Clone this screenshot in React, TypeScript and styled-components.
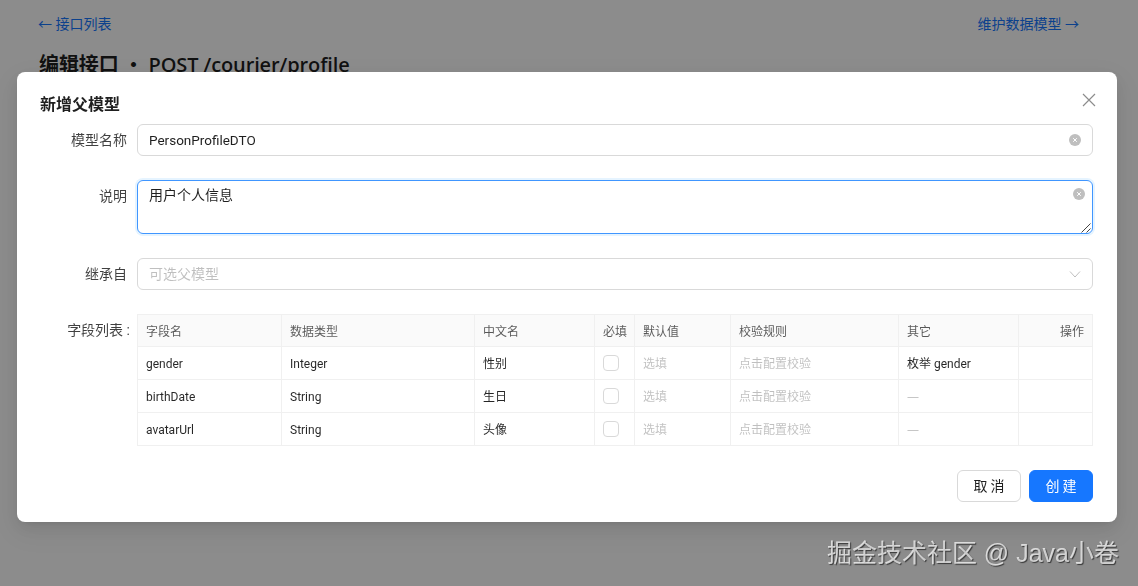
import styled, { createGlobalStyle } from "styled-components";

const FONT = `Roboto, "Noto Sans CJK SC", sans-serif`;

const GlobalStyle = createGlobalStyle`
  html, body {
    margin: 0;
    padding: 0;
    height: 100%;
    background: #fff;
    overflow: hidden;
    font-family: ${FONT};
    color: rgba(0, 0, 0, 0.88);
  }
`;

const Page = styled.div`
  padding: 14px 59px 0 38px;
`;

const TopBar = styled.div`
  display: flex;
  justify-content: space-between;
  font-size: 14px;
  line-height: 20px;
`;

const TopLink = styled.a`
  color: #1677ff;
`;

const Heading = styled.h1`
  margin: 17px 0 0 1px;
  font-family: "Open Sans", "Noto Sans CJK SC", sans-serif;
  font-size: 20px;
  line-height: 28px;
  font-weight: 600;
  letter-spacing: -0.12px;
`;

const Mask = styled.div`
  position: fixed;
  inset: 0;
  background: rgba(0, 0, 0, 0.45);
`;

const Modal = styled.div`
  position: fixed;
  left: 17px;
  top: 72px;
  width: 1100px;
  height: 450px;
  box-sizing: border-box;
  padding: 20px 24px;
  background: #fff;
  border-radius: 8px;
  box-shadow: 0 6px 16px rgba(0, 0, 0, 0.08), 0 3px 6px -4px rgba(0, 0, 0, 0.12),
    0 9px 28px 8px rgba(0, 0, 0, 0.05);
`;

const CloseButton = styled.button`
  position: absolute;
  top: 20px;
  right: 20px;
  width: 16px;
  height: 16px;
  padding: 0;
  border: 0;
  background: none;
  color: rgba(0, 0, 0, 0.45);
  display: flex;
`;

const Title = styled.div`
  margin: 1px 0 7px -1px;
  font-size: 16px;
  line-height: 24px;
  font-weight: 600;
`;

const FormRow = styled.div`
  display: flex;
  margin-bottom: 24px;
`;

const Label = styled.label<{ $gap?: number }>`
  width: ${({ $gap = 10 }) => 96 - $gap}px;
  margin-right: ${({ $gap = 10 }) => $gap}px;
  text-align: right;
  font-size: 14px;
  line-height: 32px;
  color: rgba(0, 0, 0, 0.75);
`;

const Control = styled.div`
  position: relative;
  flex: 1;
  min-width: 0;
`;

const TextInput = styled.input`
  display: block;
  width: 100%;
  height: 32px;
  box-sizing: border-box;
  padding: 4px 11px;
  border: 1px solid #d9d9d9;
  border-radius: 6px;
  outline: none;
  background: #fff;
  font-family: ${FONT};
  font-size: 13.5px;
  color: rgba(0, 0, 0, 0.88);
`;

const TextArea = styled.textarea`
  display: block;
  width: 100%;
  height: 54px;
  box-sizing: border-box;
  padding: 3px 11px 5px;
  border: 1px solid #4096ff;
  border-radius: 6px;
  outline: none;
  box-shadow: 0 0 0 2px rgba(5, 145, 255, 0.1);
  font-family: ${FONT};
  font-size: 14px;
  line-height: 22px;
  color: rgba(0, 0, 0, 0.88);
  resize: none;
`;

const ResizeGrip = styled.svg`
  position: absolute;
  right: 2px;
  bottom: 1px;
  pointer-events: none;
`;

const ClearIcon = styled.span<{ $top: number; $right: number }>`
  position: absolute;
  top: ${({ $top }) => $top}px;
  right: ${({ $right }) => $right}px;
  width: 12px;
  height: 12px;
  display: flex;
`;

const SelectBox = styled.div`
  height: 32px;
  box-sizing: border-box;
  padding: 0 11px 2px;
  border: 1px solid #d9d9d9;
  border-radius: 6px;
  display: flex;
  align-items: center;
  justify-content: space-between;
  font-size: 14px;
  color: rgba(0, 0, 0, 0.25);
`;

const Chevron = styled.span`
  display: flex;
  margin-top: 2px;
  color: rgba(0, 0, 0, 0.25);
`;

const Table = styled.table`
  width: 956px;
  table-layout: fixed;
  border-collapse: separate;
  border-spacing: 0;
  border-top: 1px solid #f0f0f0;
  border-left: 1px solid #f0f0f0;
  border-right: 1px solid #f0f0f0;
  font-size: 12px;
  line-height: 20px;
`;

const HeadCell = styled.th<{ $align?: string }>`
  height: 32px;
  box-sizing: border-box;
  padding: 2px 8px 0;
  background: #fafafa;
  border-bottom: 1px solid #f0f0f0;
  border-right: 1px solid #f0f0f0;
  text-align: ${({ $align }) => $align || "left"};
  font-weight: 400;
  white-space: nowrap;
  color: rgba(0, 0, 0, 0.65);
  &:last-child {
    border-right: 0;
  }
`;

const Cell = styled.td<{ $muted?: boolean }>`
  height: 33px;
  box-sizing: border-box;
  padding: 2px 8px 0;
  border-bottom: 1px solid #f0f0f0;
  border-right: 1px solid #f0f0f0;
  font-family: ${({ $muted }) =>
    $muted ? `"Open Sans", "Noto Sans CJK SC", sans-serif` : FONT};
  color: ${({ $muted }) =>
    $muted ? "rgba(0, 0, 0, 0.25)" : "rgba(0, 0, 0, 0.85)"};
  &:last-child {
    border-right: 0;
  }
`;

const CheckBox = styled.span`
  display: block;
  width: 16px;
  height: 16px;
  margin-top: -3px;
  box-sizing: border-box;
  border: 1px solid #d9d9d9;
  border-radius: 4px;
  background: #fff;
`;

const Footer = styled.div`
  display: flex;
  justify-content: flex-end;
  gap: 8px;
`;

const Button = styled.button<{ $primary?: boolean }>`
  width: 64px;
  height: 32px;
  padding: 0 0 2px;
  border-radius: 6px;
  border: 1px solid ${({ $primary }) => ($primary ? "#1677ff" : "#d9d9d9")};
  background: ${({ $primary }) => ($primary ? "#1677ff" : "#fff")};
  color: ${({ $primary }) => ($primary ? "#fff" : "rgba(0, 0, 0, 0.88)")};
  font-family: ${FONT};
  font-size: 14px;
  letter-spacing: 3px;
  text-indent: 3px;
`;

const Watermark = styled.div`
  position: fixed;
  right: 19px;
  bottom: 17px;
  font-family: "Liberation Sans", "Noto Sans CJK SC", sans-serif;
  font-size: 25px;
  line-height: 32px;
  color: rgba(255, 255, 255, 0.72);
  text-shadow: 1px 1px 1px rgba(0, 0, 0, 0.6);
  white-space: nowrap;
`;

const columns = [144, 193, 120, 40, 96, 168, 120, 73];

const fields = [
  { name: "gender", type: "Integer", cn: "性别", other: "枚举 gender" },
  { name: "birthDate", type: "String", cn: "生日", other: "—" },
  { name: "avatarUrl", type: "String", cn: "头像", other: "—" },
];

const Clear = ({ top, right }: { top: number; right: number }) => (
  <ClearIcon $top={top} $right={right}>
    <svg width="12" height="12" viewBox="0 0 12 12">
      <circle cx="6" cy="6" r="6" fill="#bfbfbf" />
      <path d="M4.2 4.2l3.6 3.6M7.8 4.2l-3.6 3.6" stroke="#fff" strokeWidth="1" />
    </svg>
  </ClearIcon>
);

const App = () => {
  return (
    <>
      <GlobalStyle />
      <Page>
        <TopBar>
          <TopLink>← 接口列表</TopLink>
          <TopLink>维护数据模型 →</TopLink>
        </TopBar>
        <Heading>编辑接口 ・ POST /courier/profile</Heading>
      </Page>
      <Mask />
      <Modal>
        <CloseButton aria-label="关闭">
          <svg width="16" height="16" viewBox="0 0 16 16" fill="none">
            <path
              d="M2 2l12 12M14 2L2 14"
              stroke="currentColor"
              strokeWidth="1.2"
            />
          </svg>
        </CloseButton>
        <Title>新增父模型</Title>
        <FormRow>
          <Label>模型名称</Label>
          <Control>
            <TextInput readOnly value="PersonProfileDTO" />
            <Clear top={10} right={12} />
          </Control>
        </FormRow>
        <FormRow>
          <Label>说明</Label>
          <Control>
            <TextArea readOnly value="用户个人信息" />
            <Clear top={8} right={8} />
            <ResizeGrip width="10" height="10" viewBox="0 0 10 10" fill="none">
              <path d="M0.5 9.5L9.5 0.5M5.5 9.5L9.5 5.5" stroke="#444" strokeWidth="1" />
            </ResizeGrip>
          </Control>
        </FormRow>
        <FormRow>
          <Label>继承自</Label>
          <Control>
            <SelectBox>
              可选父模型
              <Chevron>
                <svg width="12" height="12" viewBox="0 0 12 12" fill="none">
                  <path d="M1 3.5l5 5.5 5-5.5" stroke="currentColor" strokeWidth="1" />
                </svg>
              </Chevron>
            </SelectBox>
          </Control>
        </FormRow>
        <FormRow>
          <Label $gap={7}>字段列表 :</Label>
          <Control>
            <Table>
              <colgroup>
                {columns.map((width, i) => (
                  <col key={i} width={width} />
                ))}
              </colgroup>
              <thead>
                <tr>
                  <HeadCell>字段名</HeadCell>
                  <HeadCell>数据类型</HeadCell>
                  <HeadCell>中文名</HeadCell>
                  <HeadCell>必填</HeadCell>
                  <HeadCell>默认值</HeadCell>
                  <HeadCell>校验规则</HeadCell>
                  <HeadCell>其它</HeadCell>
                  <HeadCell $align="right">操作</HeadCell>
                </tr>
              </thead>
              <tbody>
                {fields.map((field) => (
                  <tr key={field.name}>
                    <Cell>{field.name}</Cell>
                    <Cell>{field.type}</Cell>
                    <Cell>{field.cn}</Cell>
                    <Cell>
                      <CheckBox />
                    </Cell>
                    <Cell $muted>选填</Cell>
                    <Cell $muted>点击配置校验</Cell>
                    <Cell $muted={field.other === "—"}>{field.other}</Cell>
                    <Cell />
                  </tr>
                ))}
              </tbody>
            </Table>
          </Control>
        </FormRow>
        <Footer>
          <Button>取消</Button>
          <Button $primary>创建</Button>
        </Footer>
      </Modal>
      <Watermark>掘金技术社区 @ Java小卷</Watermark>
    </>
  );
};

export default App;
